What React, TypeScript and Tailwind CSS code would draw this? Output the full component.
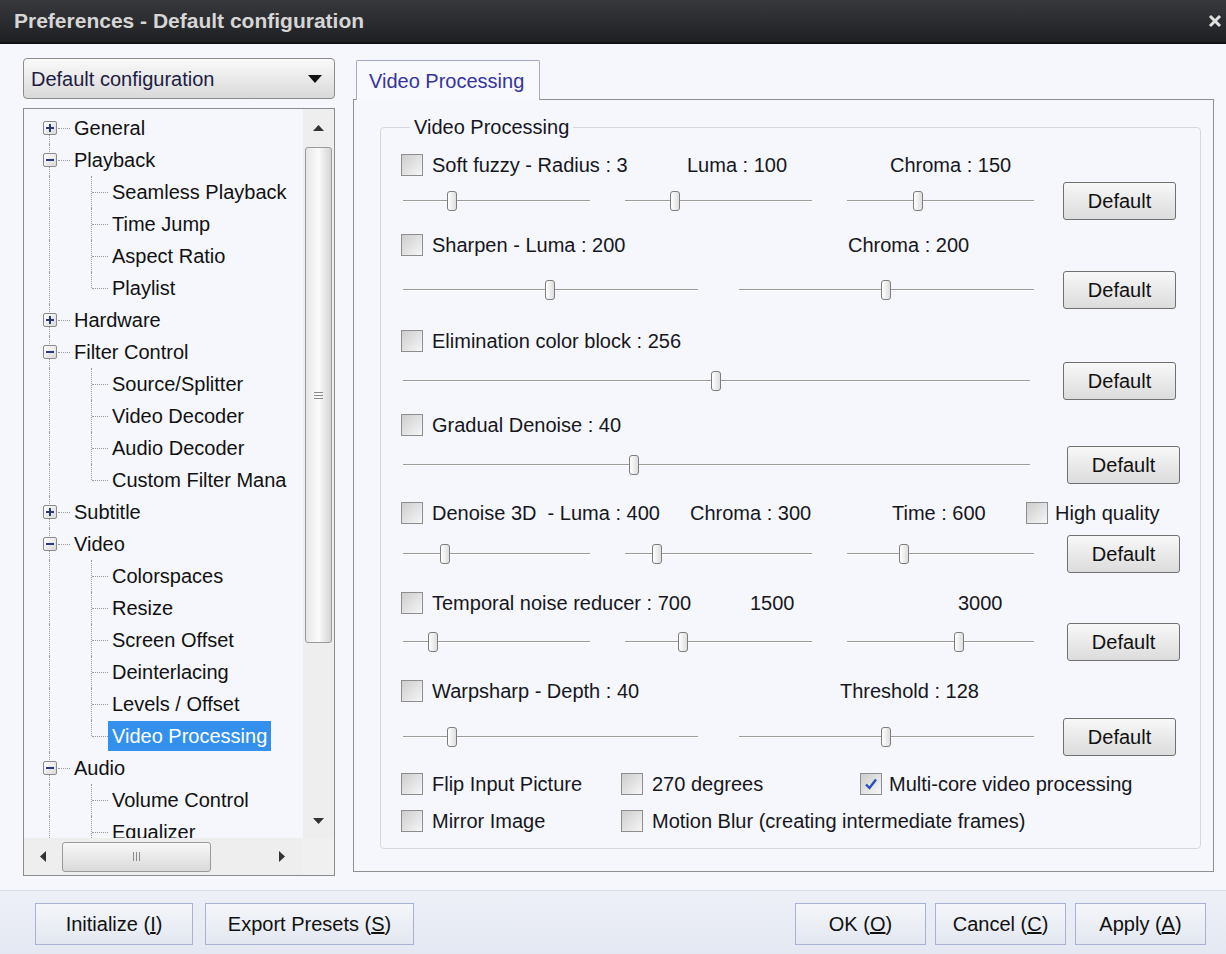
import React from 'react';

type TreeItem = { level: 1 | 2; text: string; box?: '+' | '-'; last?: boolean; selected?: boolean };

const tree: TreeItem[] = [
  { level: 1, text: 'General', box: '+' },
  { level: 1, text: 'Playback', box: '-' },
  { level: 2, text: 'Seamless Playback' },
  { level: 2, text: 'Time Jump' },
  { level: 2, text: 'Aspect Ratio' },
  { level: 2, text: 'Playlist', last: true },
  { level: 1, text: 'Hardware', box: '+' },
  { level: 1, text: 'Filter Control', box: '-' },
  { level: 2, text: 'Source/Splitter' },
  { level: 2, text: 'Video Decoder' },
  { level: 2, text: 'Audio Decoder' },
  { level: 2, text: 'Custom Filter Mana', last: true },
  { level: 1, text: 'Subtitle', box: '+' },
  { level: 1, text: 'Video', box: '-' },
  { level: 2, text: 'Colorspaces' },
  { level: 2, text: 'Resize' },
  { level: 2, text: 'Screen Offset' },
  { level: 2, text: 'Deinterlacing' },
  { level: 2, text: 'Levels / Offset' },
  { level: 2, text: 'Video Processing', last: true, selected: true },
  { level: 1, text: 'Audio', box: '-' },
  { level: 2, text: 'Volume Control' },
  { level: 2, text: 'Equalizer' },
];

function TreeRow({ item, first }: { item: TreeItem; first: boolean }) {
  return (
    <div className="relative h-[32px] flex items-center whitespace-nowrap">
      {/* trunk line */}
      <div
        className={`absolute left-[25px] bottom-0 border-l border-dotted border-[#9a9a9a] ${first ? 'top-[16px]' : 'top-0'}`}
      />
      {item.level === 1 ? (
        <>
          <div className="absolute left-[19px] top-[9px] w-[14px] h-[14px] border border-[#8a8a8a] rounded-[2px] bg-gradient-to-br from-white to-[#d8d8d8] flex items-center justify-center">
            <div className="w-[8px] h-[2px] bg-[#2a3a7a]" />
            {item.box === '+' && <div className="absolute w-[2px] h-[8px] bg-[#2a3a7a]" />}
          </div>
          <div className="absolute left-[34px] w-[12px] top-[16px] border-t border-dotted border-[#9a9a9a]" />
          <span className="ml-[50px] text-[#111]">{item.text}</span>
        </>
      ) : (
        <>
          <div
            className={`absolute left-[67px] top-0 border-l border-dotted border-[#9a9a9a] ${item.last ? 'h-[16px]' : 'bottom-0'}`}
          />
          <div className="absolute left-[68px] w-[16px] top-[16px] border-t border-dotted border-[#9a9a9a]" />
          <span
            className={`ml-[84px] px-[4px] h-[30px] flex items-center ${
              item.selected ? 'bg-[#3390ec] text-white' : 'text-[#111]'
            }`}
          >
            {item.text}
          </span>
        </>
      )}
    </div>
  );
}

function Check({ checked }: { checked?: boolean }) {
  return (
    <div className="w-[22px] h-[22px] shrink-0 border border-[#8e8e8e] bg-[linear-gradient(135deg,#cdcdcd,#f6f6f6)] flex items-center justify-center">
      {checked && (
        <svg width="16" height="16" viewBox="0 0 16 16">
          <path d="M3 8.5 L6.5 12 L13 3.5" fill="none" stroke="#2b4bb8" strokeWidth="2.4" />
        </svg>
      )}
    </div>
  );
}

function Slider({ w, pos }: { w: number; pos: number }) {
  return (
    <div className="relative h-[24px] shrink-0 flex items-center" style={{ width: w }}>
      <div className="w-full h-[2px] border-t border-[#9c9c9c] border-b border-b-white bg-[#c8c8c8]" />
      <div
        className="absolute top-[2px] w-[10px] h-[20px] border border-[#7c7c7c] rounded-[3px] bg-gradient-to-r from-white to-[#dedede]"
        style={{ left: pos - 5 }}
      />
    </div>
  );
}

function DefaultBtn({ ml }: { ml: string }) {
  return (
    <button
      className={`${ml} w-[113px] h-[38px] shrink-0 border border-[#707070] rounded-[3px] bg-gradient-to-b from-[#f8f8f8] to-[#dcdcdc] text-[#111]`}
    >
      Default
    </button>
  );
}

function BottomBtn({ children, w }: { children: React.ReactNode; w: string }) {
  return (
    <button
      className={`${w} h-[42px] border border-[#aab2d4] bg-gradient-to-b from-[#f4f6fa] to-[#e3e7f0] text-[#111] flex items-center justify-center`}
    >
      {children}
    </button>
  );
}

export default function App() {
  return (
    <div className="w-[1226px] h-[954px] flex flex-col bg-[#f5f7fc] font-['Liberation_Sans',Arial,sans-serif] text-[20px] leading-[24px] text-[#161620] overflow-hidden">
      {/* Title bar */}
      <div className="h-[44px] shrink-0 flex items-center justify-between pl-[14px] pr-[4px] bg-gradient-to-b from-[#38393c] to-[#1f2023] border-b-2 border-[#111]">
        <span className="text-[21px] font-bold text-[#d6d6d6]">Preferences - Default configuration</span>
        <svg width="14" height="14" viewBox="0 0 14 14">
          <path d="M2 2 L12 12 M12 2 L2 12" stroke="#e0e0e0" strokeWidth="3" />
        </svg>
      </div>

      {/* Main */}
      <div className="flex-1 flex pl-[23px] pr-[12px] gap-[18px] border-b border-[#d8dce6]">
        {/* Left column */}
        <div className="w-[312px] flex flex-col pt-[14px]">
          <div className="h-[41px] flex items-center justify-between pl-[7px] pr-[12px] border border-[#8c8c8c] rounded-[4px] bg-gradient-to-b from-[#fafafa] to-[#d9d9d9] text-[#1c1c44]">
            <span>Default configuration</span>
            <svg width="14" height="8" viewBox="0 0 14 8">
              <path d="M0 0 L14 0 L7 8 Z" fill="#111" />
            </svg>
          </div>
          <div className="mt-[9px] h-[768px] border border-[#8c8c8c] bg-[#f5f7fc] flex flex-col">
            <div className="flex-1 flex min-h-0">
              <div className="flex-1 overflow-hidden pt-[3px]">
                {tree.map((t, i) => (
                  <TreeRow key={i} item={t} first={i === 0} />
                ))}
              </div>
              {/* vertical scrollbar */}
              <div className="w-[31px] flex flex-col bg-[#eeeeee]">
                <div className="h-[38px] flex items-center justify-center">
                  <svg width="11" height="6" viewBox="0 0 11 6">
                    <path d="M0 6 L5.5 0 L11 6 Z" fill="#333" />
                  </svg>
                </div>
                <div className="mx-[2px] h-[496px] border border-[#9a9a9a] rounded-[3px] bg-gradient-to-r from-[#e6e6e6] via-[#fbfbfb] to-[#d4d4d4] flex items-center justify-center">
                  <div className="flex flex-col gap-[2px]">
                    <div className="w-[9px] h-[1px] bg-[#8a8a8a]" />
                    <div className="w-[9px] h-[1px] bg-[#8a8a8a]" />
                    <div className="w-[9px] h-[1px] bg-[#8a8a8a]" />
                  </div>
                </div>
                <div className="flex-1 flex items-end justify-center pb-[14px]">
                  <svg width="11" height="6" viewBox="0 0 11 6">
                    <path d="M0 0 L11 0 L5.5 6 Z" fill="#333" />
                  </svg>
                </div>
              </div>
            </div>
            {/* horizontal scrollbar */}
            <div className="h-[37px] flex items-center bg-[#eeeeee]">
              <div className="w-[38px] flex justify-center">
                <svg width="6" height="11" viewBox="0 0 6 11">
                  <path d="M6 0 L0 5.5 L6 11 Z" fill="#333" />
                </svg>
              </div>
              <div className="w-[149px] h-[30px] border border-[#9a9a9a] rounded-[3px] bg-gradient-to-b from-[#f8f8f8] to-[#d9d9d9] flex items-center justify-center gap-[2px]">
                <div className="w-[1px] h-[9px] bg-[#8a8a8a]" />
                <div className="w-[1px] h-[9px] bg-[#8a8a8a]" />
                <div className="w-[1px] h-[9px] bg-[#8a8a8a]" />
              </div>
              <div className="flex-1 flex justify-end pr-[16px]">
                <svg width="6" height="11" viewBox="0 0 6 11">
                  <path d="M0 0 L6 5.5 L0 11 Z" fill="#333" />
                </svg>
              </div>
              <div className="w-[33px] self-stretch bg-[#f0f0f0]" />
            </div>
          </div>
        </div>

        {/* Right column */}
        <div className="w-[861px] flex flex-col pt-[16px]">
          <div className="flex">
            <div className="relative z-10 ml-[3px] w-[184px] h-[40px] -mb-[1px] border border-b-0 border-[#a4aac6] rounded-t-[2px] bg-[#f8f9fd] pl-[12px] flex items-center text-[#34349c]">
              Video Processing
            </div>
          </div>
          <div className="h-[773px] border border-[#8f8f8f] pl-[26px] pr-[16px] pt-[15px]">
            <fieldset className="border border-[#d3d7df] rounded-[4px] pl-[20px] pr-[20px] pb-[16px] h-[734px]">
              <legend className="ml-[9px] px-[4px]">Video Processing</legend>

              {/* Soft fuzzy */}
              <div className="mt-[14px] h-[24px] flex items-center">
                <div className="w-[286px] flex items-center gap-[9px]">
                  <Check />
                  <span>Soft fuzzy - Radius : 3</span>
                </div>
                <span className="w-[203px]">Luma : 100</span>
                <span>Chroma : 150</span>
              </div>
              <div className="mt-[5px] h-[38px] flex items-center pl-[2px]">
                <Slider w={187} pos={49} />
                <div className="w-[35px]" />
                <Slider w={187} pos={50} />
                <div className="w-[35px]" />
                <Slider w={187} pos={71} />
                <DefaultBtn ml="ml-[29px]" />
              </div>

              {/* Sharpen */}
              <div className="mt-[13px] h-[24px] flex items-center">
                <div className="w-[447px] flex items-center gap-[9px]">
                  <Check />
                  <span>Sharpen - Luma : 200</span>
                </div>
                <span>Chroma : 200</span>
              </div>
              <div className="mt-[14px] h-[38px] flex items-center pl-[2px]">
                <Slider w={295} pos={147} />
                <div className="w-[41px]" />
                <Slider w={295} pos={147} />
                <DefaultBtn ml="ml-[29px]" />
              </div>

              {/* Elimination */}
              <div className="mt-[20px] h-[24px] flex items-center gap-[9px]">
                <Check />
                <span>Elimination color block : 256</span>
              </div>
              <div className="mt-[9px] h-[38px] flex items-center pl-[2px]">
                <Slider w={627} pos={313} />
                <DefaultBtn ml="ml-[33px]" />
              </div>

              {/* Gradual Denoise */}
              <div className="mt-[13px] h-[24px] flex items-center gap-[9px]">
                <Check />
                <span>Gradual Denoise : 40</span>
              </div>
              <div className="mt-[9px] h-[38px] flex items-center pl-[2px]">
                <Slider w={627} pos={231} />
                <DefaultBtn ml="ml-[37px]" />
              </div>

              {/* Denoise 3D */}
              <div className="mt-[17px] h-[24px] flex items-center">
                <div className="w-[289px] flex items-center gap-[9px]">
                  <Check />
                  <span className="whitespace-pre">Denoise 3D  - Luma : 400</span>
                </div>
                <span className="w-[202px]">Chroma : 300</span>
                <span className="w-[134px]">Time : 600</span>
                <div className="flex items-center gap-[7px]">
                  <Check />
                  <span>High quality</span>
                </div>
              </div>
              <div className="mt-[10px] h-[38px] flex items-center pl-[2px]">
                <Slider w={187} pos={42} />
                <div className="w-[35px]" />
                <Slider w={187} pos={32} />
                <div className="w-[35px]" />
                <Slider w={187} pos={57} />
                <DefaultBtn ml="ml-[33px]" />
              </div>

              {/* Temporal */}
              <div className="mt-[18px] h-[24px] flex items-center">
                <div className="w-[349px] flex items-center gap-[9px]">
                  <Check />
                  <span>Temporal noise reducer : 700</span>
                </div>
                <span className="w-[208px]">1500</span>
                <span>3000</span>
              </div>
              <div className="mt-[8px] h-[38px] flex items-center pl-[2px]">
                <Slider w={187} pos={30} />
                <div className="w-[35px]" />
                <Slider w={187} pos={58} />
                <div className="w-[35px]" />
                <Slider w={187} pos={112} />
                <DefaultBtn ml="ml-[33px]" />
              </div>

              {/* Warpsharp */}
              <div className="mt-[18px] h-[24px] flex items-center">
                <div className="w-[439px] flex items-center gap-[9px]">
                  <Check />
                  <span>Warpsharp - Depth : 40</span>
                </div>
                <span>Threshold : 128</span>
              </div>
              <div className="mt-[15px] h-[38px] flex items-center pl-[2px]">
                <Slider w={295} pos={49} />
                <div className="w-[41px]" />
                <Slider w={295} pos={147} />
                <DefaultBtn ml="ml-[29px]" />
              </div>

              {/* Options */}
              <div className="mt-[16px] h-[24px] flex items-center">
                <div className="w-[220px] flex items-center gap-[9px]">
                  <Check />
                  <span>Flip Input Picture</span>
                </div>
                <div className="w-[239px] flex items-center gap-[9px]">
                  <Check />
                  <span>270 degrees</span>
                </div>
                <div className="flex items-center gap-[7px]">
                  <Check checked />
                  <span>Multi-core video processing</span>
                </div>
              </div>
              <div className="mt-[13px] h-[24px] flex items-center">
                <div className="w-[220px] flex items-center gap-[9px]">
                  <Check />
                  <span>Mirror Image</span>
                </div>
                <div className="flex items-center gap-[9px]">
                  <Check />
                  <span>Motion Blur (creating intermediate frames)</span>
                </div>
              </div>
            </fieldset>
          </div>
        </div>
      </div>

      {/* Footer */}
      <div className="h-[63px] shrink-0 flex items-start pt-[12px] pl-[35px] pr-[20px] bg-gradient-to-b from-[#edf0f7] to-[#e4e8f2]">
        <BottomBtn w="w-[158px]">
          <span>
            Initialize (<u>I</u>)
          </span>
        </BottomBtn>
        <div className="w-[12px]" />
        <BottomBtn w="w-[209px]">
          <span>
            Export Presets (<u>S</u>)
          </span>
        </BottomBtn>
        <div className="flex-1" />
        <BottomBtn w="w-[131px]">
          <span>
            OK (<u>O</u>)
          </span>
        </BottomBtn>
        <div className="w-[9px]" />
        <BottomBtn w="w-[131px]">
          <span>
            Cancel (<u>C</u>)
          </span>
        </BottomBtn>
        <div className="w-[9px]" />
        <BottomBtn w="w-[131px]">
          <span>
            Apply (<u>A</u>)
          </span>
        </BottomBtn>
      </div>
    </div>
  );
}
